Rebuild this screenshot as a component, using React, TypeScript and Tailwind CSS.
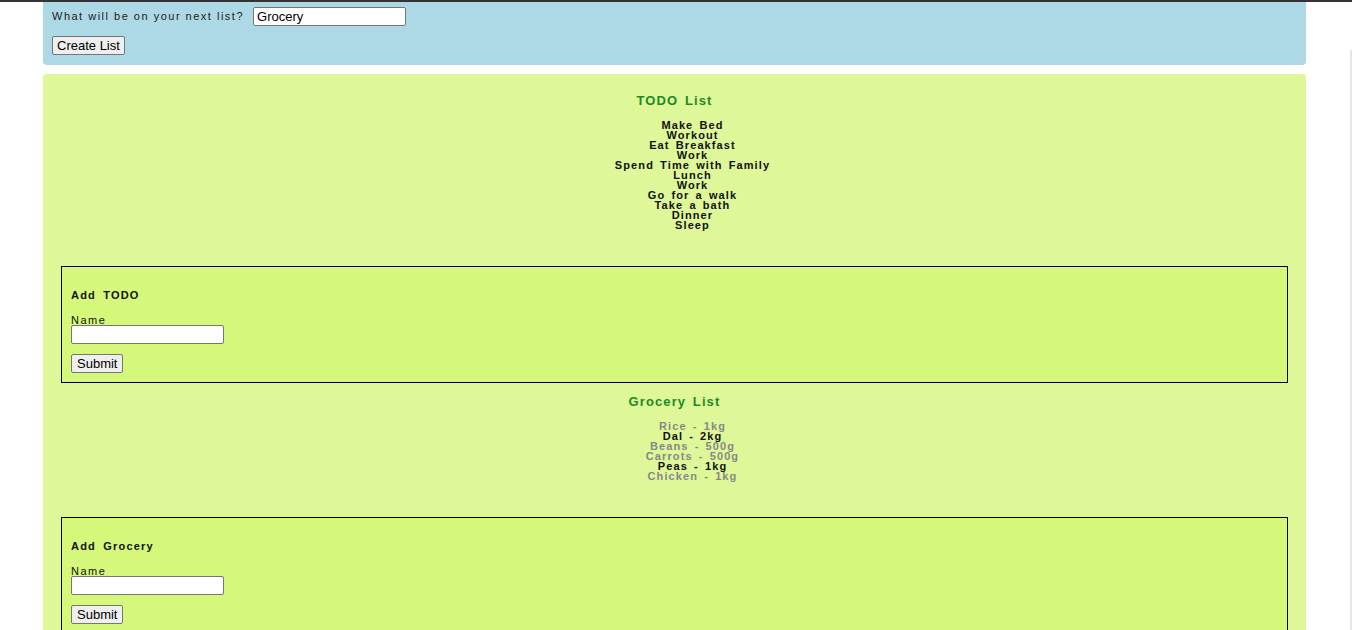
import React from "react";

const todos = [
  "Make Bed",
  "Workout",
  "Eat Breakfast",
  "Work",
  "Spend Time with Family",
  "Lunch",
  "Work",
  "Go for a walk",
  "Take a bath",
  "Dinner",
  "Sleep",
];

const groceries = [
  { name: "Rice - 1kg", done: true },
  { name: "Dal - 2kg", done: false },
  { name: "Beans - 500g", done: true },
  { name: "Carrots - 500g", done: true },
  { name: "Peas - 1kg", done: false },
  { name: "Chicken - 1kg", done: true },
];

const font = { fontFamily: "Arial, 'Liberation Sans', sans-serif" };

function AddForm({ title }: { title: string }) {
  return (
    <div className="border border-black bg-[#d6f87a] pl-[9px] pt-[21px] pb-[9px]">
      <div className="text-[11px] font-bold tracking-[1.2px] [word-spacing:3px] leading-[14px] text-[#111]">{title}</div>
      <div className="mt-[13px] text-[11px] tracking-[1.5px] leading-[11px] text-[#111]">Name</div>
      <input className="mt-[-1px] block w-[153px] h-[19px] bg-white border border-[#767676] rounded-[2px] text-[13px] px-[2px]" />
      <button className="mt-[10px] block h-[19px] px-[5px] bg-[#efefef] border border-[#767676] rounded-[2px] text-[13px] leading-[15px] text-black tracking-normal">
        Submit
      </button>
    </div>
  );
}

export default function App() {
  return (
    <div className="min-h-[630px] bg-white relative" style={font}>
      <div className="h-[2px] bg-[#333]" />
      <div className="absolute right-0 top-[50px] bottom-0 w-[2px] bg-[#e6e6e6]" />
      <div className="ml-[43px] w-[1263px]">
        <div className="bg-[#add8e6] rounded-b-[4px] pl-[9px] pt-[5px] pb-[10px]">
          <div className="flex items-center gap-[9px]">
            <span className="text-[11px] tracking-[1.5px] text-[#222]">What will be on your next list?</span>
            <input
              defaultValue="Grocery"
              className="w-[153px] h-[19px] bg-white border border-[#767676] rounded-[2px] text-[13px] px-[3px] text-black"
            />
          </div>
          <button className="mt-[10px] block h-[19px] px-[4px] bg-[#efefef] border border-[#767676] rounded-[2px] text-[13px] leading-[15px] text-black">
            Create List
          </button>
        </div>

        <div className="mt-[9px] bg-[#ddf799] rounded-t-[4px] px-[18px] pt-[19px] pb-[20px]">
          <h3 className="text-center text-[13px] font-bold tracking-[1.1px] [word-spacing:2px] leading-[15px] text-[#1f8a1f]">TODO List</h3>
          <ul className="mt-[12px] pl-[36px] text-center">
            {todos.map((t, i) => (
              <li key={i} className="text-[11px] font-bold tracking-[1.1px] [word-spacing:2px] leading-[10px] text-[#111]">
                {t}
              </li>
            ))}
          </ul>
          <div className="mt-[36px]">
            <AddForm title="Add TODO" />
          </div>

          <h3 className="mt-[11px] text-center text-[13px] font-bold tracking-[1.1px] [word-spacing:2px] leading-[15px] text-[#1f8a1f]">Grocery List</h3>
          <ul className="mt-[12px] pl-[36px] text-center">
            {groceries.map((g, i) => (
              <li
                key={i}
                className={
                  "text-[11px] font-bold tracking-[1.1px] [word-spacing:2px] leading-[10px] " +
                  (g.done ? "text-[#888]" : "text-[#111]")
                }
              >
                {g.name}
              </li>
            ))}
          </ul>
          <div className="mt-[36px]">
            <AddForm title="Add Grocery" />
          </div>
        </div>
      </div>
    </div>
  );
}
